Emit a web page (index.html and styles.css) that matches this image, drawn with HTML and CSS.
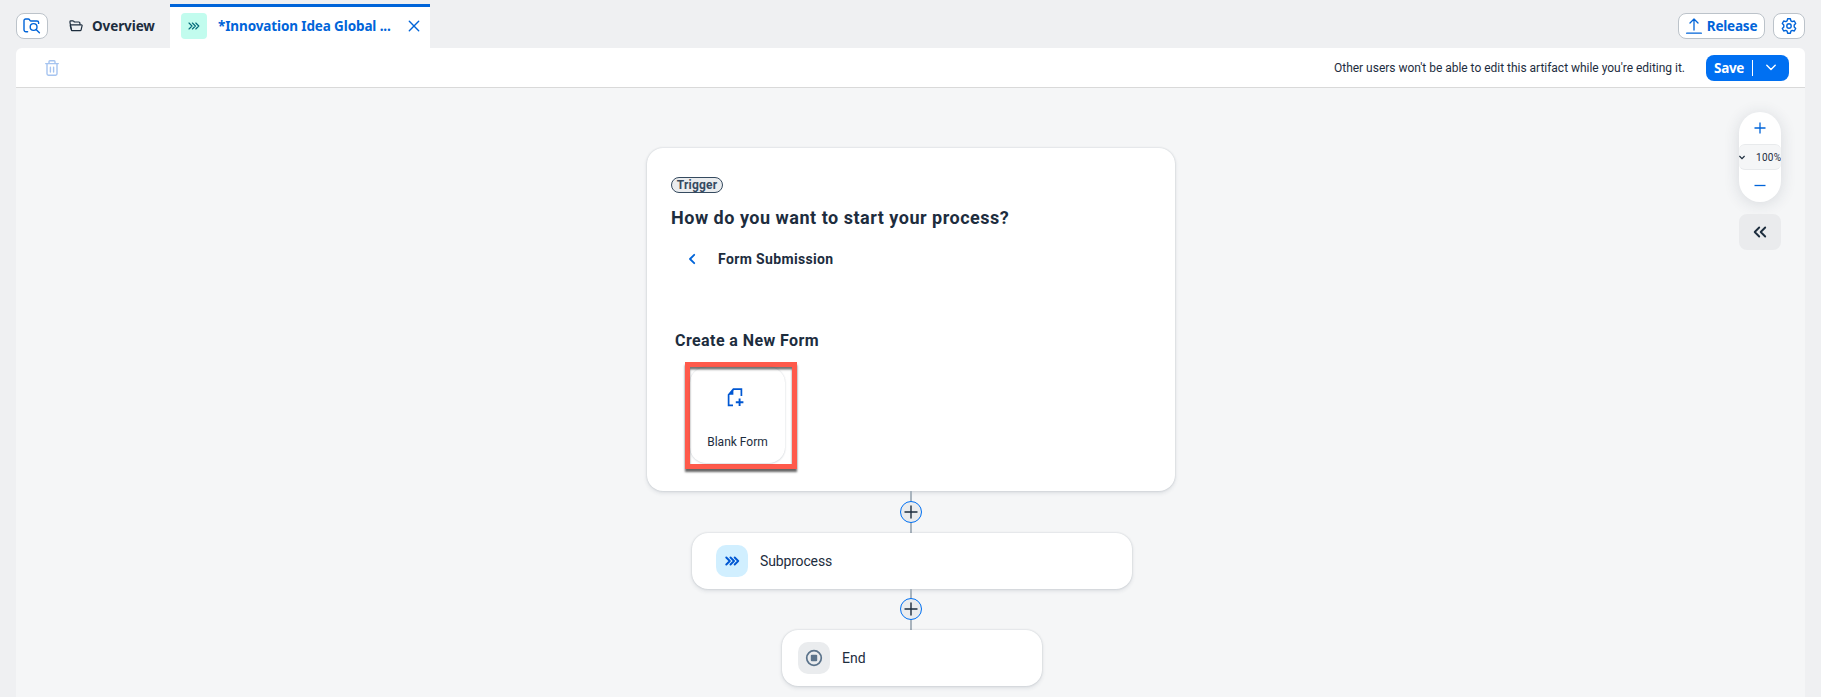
FILE: index.html
```
<!DOCTYPE html>
<html lang="en">
<head>
<meta charset="utf-8">
<title>Process Editor</title>
<link rel="stylesheet" href="styles.css">
</head>
<body>
<header class="tabbar">
  <button class="btn btn-icon" aria-label="Search artifacts">
    <svg width="18" height="16" viewBox="0 0 18 16" fill="none" stroke="currentColor" stroke-width="1.4" stroke-linecap="round" stroke-linejoin="round"><path d="M4.6 13.8H3a2 2 0 0 1-2-2V2.6C1 1.7 1.7 1 2.6 1h2.6c.6 0 1 .2 1.3.7l.6.9c.2.3.5.4.9.4h6c.9 0 1.6.7 1.6 1.6v.8"/><circle cx="10.6" cy="9" r="3.4"/><path d="M13.1 11.5l3.3 3.3"/></svg>
  </button>
  <a class="tab tab-overview">
    <svg width="14" height="12" viewBox="0 0 14 12" fill="none" stroke="currentColor" stroke-width="1.2" stroke-linejoin="round"><path d="M2.6 10.6L1 2.6V1.6c0-.5.3-.8.8-.8h2.1c.3 0 .5.1.7.3l.8.9h4.500c.6 0 1 .4 1 1v1.800"/><path d="M2.700 10.600L1.300 6c-.2-.6.2-1.200.9-1.200h10.200c.5 0 .8.4.7.9l-1 4.100c-.1.5-.5.8-1 .8H2.700z"/></svg>
    <span class="t-overview">Overview</span>
  </a>
  <a class="tab tab-active">
    <span class="tab-badge"><svg width="12" height="8" viewBox="0 0 12 8" fill="none" stroke="currentColor" stroke-width="1.15" stroke-linejoin="round" stroke-linecap="round"><path d="M1 1l3 3-3 3M4.400 1l3 3-3 3M7.800 1l3 3-3 3"/></svg></span>
    <span class="t-tab">*Innovation Idea Global ...</span>
    <svg class="close" width="12" height="12" viewBox="0 0 12 12" stroke="currentColor" stroke-width="1.400" stroke-linecap="round"><path d="M1.300 1.300l9.400 9.400M10.700 1.300l-9.400 9.400"/></svg>
  </a>
  <div class="tab-actions">
    <button class="btn btn-release">
      <svg width="16" height="16" viewBox="0 0 16 16" fill="none" stroke="currentColor" stroke-width="1.300" stroke-linecap="round" stroke-linejoin="round"><path d="M8 12V1M4 5l4-4 4 4M.6 15.200h14.800"/></svg>
      <span class="t-release">Release</span>
    </button>
    <button class="btn btn-icon" aria-label="Settings">
      <svg width="16" height="16" viewBox="0 0 16 16" fill="none" stroke="currentColor" stroke-width="1.400" stroke-linejoin="round"><path d="M6.600.8h2.800l.5 2 1.300.8 2.100-.6 1.400 2.500L13.200 7v2l1.500 1.500-1.400 2.500-2.100-.6-1.300.8-.5 2H6.600l-.5-2-1.300-.8-2.100.6-1.400-2.500L2.800 9V7L1.300 5.500 2.700 3l2.100.6 1.300-.8z"/><circle cx="8" cy="8" r="2.200"/></svg>
    </button>
  </div>
</header>
<main class="editor">
  <div class="toolbar">
    <svg class="trash" width="14" height="16" viewBox="0 0 14 16" fill="none" stroke="currentColor" stroke-width="1.400" stroke-linecap="round" stroke-linejoin="round"><path d="M.7 3.600h12.600M4 3.400V1.700c0-.6.3-.9.9-.9h4.200c.6 0 .9.3.9.9v1.700M2 3.800v10c0 .9.500 1.400 1.400 1.400h7.200c.9 0 1.400-.5 1.400-1.400v-10M5.400 7.300v4.700M8.600 7.300v4.700"/></svg>
    <span class="notice">Other users won't be able to edit this artifact while you're editing it.</span>
    <div class="save">
      <span class="t-save">Save</span><i class="save-sep"></i>
      <svg width="10" height="7" viewBox="0 0 10 7" fill="none" stroke="currentColor" stroke-width="1.400" stroke-linecap="round" stroke-linejoin="round"><path d="M.8 1.200L5 5.400l4.200-4.200"/></svg>
    </div>
  </div>
  <div class="canvas">
    <div class="flow">
      <section class="trigger-card">
        <span class="chip">Trigger</span>
        <h1 class="question">How do you want to start your process?</h1>
        <div class="crumb">
          <svg width="8" height="12" viewBox="0 0 8 12" fill="none" stroke="currentColor" stroke-width="1.800" stroke-linecap="round" stroke-linejoin="round"><path d="M6.200 1.800L2 6l4.200 4.200"/></svg>
          <span class="t-crumb">Form Submission</span>
        </div>
        <h2 class="create">Create a New Form</h2>
        <div class="highlight">
          <div class="tile">
            <svg width="17" height="19" viewBox="0 0 17 19" fill="none" stroke="currentColor" stroke-width="1.700"><path d="M6 17.400H1.600V6.800L6.400 1.200h8V8"/><path d="M1.600 6.800L6.400 1.200v5.600z" fill="currentColor" stroke="none"/><path d="M12.600 10.400v7.600M8.800 14.200h7.600" stroke-width="1.900"/></svg>
            <span class="t-blank">Blank Form</span>
          </div>
        </div>
      </section>
      <div class="link link-first"><span class="add"><svg width="14" height="14" viewBox="0 0 14 14" stroke="currentColor" stroke-width="1.400" stroke-linecap="round"><path d="M7 1v12M1 7h12"/></svg></span></div>
      <section class="step step-sub">
        <span class="step-icon icon-sub"><svg width="15" height="10" viewBox="0 0 15 10" fill="none" stroke="currentColor" stroke-width="1.900" stroke-linejoin="round" stroke-linecap="round"><path d="M1.300 1.500L4.800 5 1.300 8.500M5.500 1.500L9 5 5.500 8.500M9.700 1.500L13.200 5 9.700 8.500"/></svg></span>
        <span class="t-sub">Subprocess</span>
      </section>
      <div class="link link-second"><span class="add"><svg width="14" height="14" viewBox="0 0 14 14" stroke="currentColor" stroke-width="1.400" stroke-linecap="round"><path d="M7 1v12M1 7h12"/></svg></span></div>
      <section class="step step-end">
        <span class="step-icon icon-end"><svg width="18" height="18" viewBox="0 0 18 18"><circle cx="9" cy="9" r="7.300" fill="none" stroke="currentColor" stroke-width="1.700"/><rect x="5.800" y="5.800" width="6.400" height="6.400" rx="1" fill="currentColor"/></svg></span>
        <span class="t-end">End</span>
      </section>
    </div>
    <aside class="zoom-tools">
      <div class="zoom-pill">
        <span class="zoom-btn"><svg width="12" height="12" viewBox="0 0 12 12" stroke="currentColor" stroke-width="1.300"><path d="M6 .5v11M.5 6h11"/></svg></span>
        <span class="zoom-level"><svg width="6" height="5" viewBox="0 0 6 5" fill="none" stroke="currentColor" stroke-width="1.200"><path d="M.4 1L3 3.600 5.600 1"/></svg><span class="t-zoom">100%</span></span>
        <span class="zoom-btn"><svg width="12" height="12" viewBox="0 0 12 12" stroke="currentColor" stroke-width="1.300"><path d="M.5 5.500h11"/></svg></span>
      </div>
      <button class="collapse" aria-label="Collapse panel"><svg width="14" height="12" viewBox="0 0 14 12" fill="none" stroke="currentColor" stroke-width="1.900" stroke-linejoin="round" stroke-linecap="round"><path d="M6.200 1.500L1.700 6l4.500 4.500M12.200 1.500L7.700 6l4.500 4.500"/></svg></button>
    </aside>
  </div>
</main>
</body>
</html>
```
FILE: styles.css
```
* { box-sizing: border-box; }
body {
  margin: 0;
  height: 697px;
  overflow: hidden;
  background: #eff0f2;
  color: #1d2d3e;
  font-family: Roboto, "Noto Sans", sans-serif;
  font-size: 14px;
  line-height: 20px;
  display: flex;
  flex-direction: column;
}
span, h1, h2 { white-space: nowrap; }
svg { flex: none; display: block; }
button { font: inherit; margin: 0; padding: 0; }
h1, h2 { margin: 0; }

.tabbar { height: 48px; padding: 0 16px; display: flex; flex: none; align-items: flex-start; font-family: "Noto Sans", sans-serif; }
.btn {
  height: 26px;
  margin-top: 13px;
  border: 1px solid #bcc3ca;
  border-radius: 8px;
  background: #fff;
  color: #0064d9;
  display: flex;
  align-items: center;
  justify-content: center;
}
.btn-icon { width: 32px; }
.tab { display: flex; align-items: center; font-weight: 700; font-size: 13.500px; }
.tab-overview { margin: 13px 0 0 21px; height: 26px; gap: 9px; width: 101px; letter-spacing: -.1px; }
.tab-active {
  width: 260px; height: 44px; margin-top: 4px; padding: 0 10px 0 11px;
  border-top: 3px solid #0064d9; background: #fff; color: #0064d9;
}
.tab-badge {
  width: 26px; height: 26px; margin: -3px 11px 0 0; border-radius: 4px;
  background: #c2fcee; color: #046c7a;
  display: flex; align-items: center; justify-content: center;
}
.t-tab { margin-top: -3px; letter-spacing: -.12px; }
.close { margin: -3px 0 0 auto; }
.tab-actions { margin-left: auto; display: flex; gap: 8px; }
.btn-release { width: 87px; gap: 5px; font-weight: 700; font-size: 13.500px; letter-spacing: -.2px; }

.editor { flex: 1; margin: 0 16px; display: flex; flex-direction: column; min-height: 0; }
.toolbar {
  height: 40px; flex: none; padding: 0 16px 0 29px;
  background: #fff; border-bottom: 1px solid #d9d9d9; border-radius: 6px 6px 0 0;
  display: flex; align-items: center;
}
.trash { color: #a6c4f0; }
.notice { margin-left: auto; font-size: 12px; letter-spacing: -.02px; margin-right: 21px; }
.save {
  width: 83px; height: 26px; border-radius: 8px; background: #0070f2; color: #fff;
  display: flex; align-items: center; padding-left: 8px;
  font-family: "Noto Sans", sans-serif; font-weight: 700; font-size: 13.500px; letter-spacing: -.3px;
}
.save-sep { width: 1px; height: 16px; background: #fff; margin-left: 8px; }
.save svg { margin-left: 13px; }

.canvas { position: relative; flex: 1; background: #f5f6f7; overflow: hidden; }
.flow { display: flex; flex-direction: column; align-items: center; padding-top: 60px; }
.trigger-card {
  width: 528px; height: 343px; padding: 29px 24px 0; border-radius: 16px; background: #fff; margin-left: 1px;
  box-shadow: 0 0 2px rgba(34, 53, 72, .2), 0 2px 4px rgba(34, 53, 72, .12);
  display: flex; flex-direction: column; align-items: flex-start;
}
.chip {
  width: 52px; height: 16px; border: 1px solid #354a5f; border-radius: 8px; background: #eaecee; color: #354a5f;
  font-size: 12px; font-weight: 700; letter-spacing: .2px; line-height: 15px; text-align: center;
}
.question { margin-top: 12px; font-size: 18px; letter-spacing: .51px; line-height: 26px; font-weight: 700; }
.crumb { display: flex; align-items: center; height: 20px; margin: 18px 0 0 17px; gap: 22px; color: #0064d9; }
.t-crumb { color: #1d2d3e; font-weight: 700; font-size: 14px; letter-spacing: .36px; }
.create { margin: 61px 0 0 4px; font-size: 16px; letter-spacing: .42px; line-height: 22px; font-weight: 700; }
.highlight {
  width: 112px; height: 107px; margin: 10px 0 0 14px; border: 5px solid #ff5a4b;
  box-shadow: 0 2.500px 2px rgba(0, 0, 0, .6), inset 0 2.500px 2px rgba(0, 0, 0, .55);
}
.tile {
  width: 95px; height: 96px; border-radius: 16px;
  box-shadow: 0 0 2px rgba(34, 53, 72, .16), 0 1px 2px rgba(34, 53, 72, .1);
  display: flex; flex-direction: column; align-items: center; padding: 21px 0 0; color: #0057d2;
}
.tile svg { margin-right: 4px; }
.t-blank { color: #1d2d3e; font-size: 12px; line-height: 18px; margin-top: 26px; }

.link { width: 22px; display: flex; justify-content: center; background: linear-gradient(#a9b4be, #a9b4be) center / 2px 100% no-repeat; margin-left: 1px; }
.link-first { height: 42px; padding-top: 10px; }
.link-second { height: 41px; padding-top: 9px; }
.add {
  width: 22px; height: 22px; border: 1px solid #0070f2; border-radius: 50%; background: #eaecee;
  display: flex; align-items: center; justify-content: center;
}
.step {
  height: 56px; border-radius: 16px; background: #fff; display: flex; align-items: center; gap: 12px;
  box-shadow: 0 0 2px rgba(34, 53, 72, .2), 0 2px 4px rgba(34, 53, 72, .12);
}
.step-sub { width: 440px; padding-left: 24px; margin-left: 3px; }
.step-end { width: 260px; padding-left: 16px; margin-left: 3px; }
.t-sub { letter-spacing: -.15px; }
.step-icon { width: 32px; height: 32px; border-radius: 10px; display: flex; align-items: center; justify-content: center; }
.icon-sub { background: #d1efff; color: #0057d2; }
.icon-end { background: #eaecee; color: #5b738b; }

.zoom-tools { position: absolute; top: 24px; right: 24px; width: 42px; display: flex; flex-direction: column; gap: 12px; }
.zoom-pill { height: 90px; border-radius: 21px; background: #fff; box-shadow: 0 2px 16px rgba(34, 53, 72, .14); display: flex; flex-direction: column; }
.zoom-btn { flex: 1; display: flex; align-items: center; justify-content: center; color: #0064d9; }
.zoom-level {
  height: 26px; border: solid #e8eaec; border-width: 1px 0; border-radius: 6px; background: #f5f6f7;
  display: flex; align-items: center; gap: 11px; overflow: hidden;
}
.t-zoom { font-size: 10px; letter-spacing: .3px; padding-top: 2px; }
.collapse { height: 36px; border: 0; border-radius: 8px; background: #eaebed; color: #1d2d3e; display: flex; align-items: center; justify-content: center; }
```
